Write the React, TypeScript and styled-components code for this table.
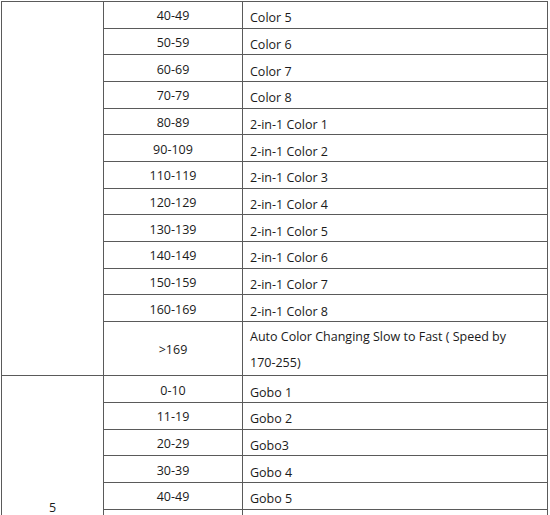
import React from "react";
import styled, { createGlobalStyle } from "styled-components";

const Global = createGlobalStyle`
  html, body { margin: 0; padding: 0; background: #ffffff; }
  body { font-family: "Open Sans", "Noto Sans", "DejaVu Sans", sans-serif; color: #1a1a1a; }
`;

const Table = styled.table`
  border-collapse: collapse;
  table-layout: fixed;
  width: 546px;
  margin: 1px 0 0 1px;
  font-size: 12.5px;
`;

const Col = styled.col<{ $w: number }>`
  width: ${(p) => p.$w}px;
`;

const Row = styled.tr<{ $h: number }>`
  height: ${(p) => p.$h}px;
`;

const Cell = styled.td`
  border: 1px solid #5a5a5a;
  padding: 0;
`;

const ChannelCell = styled(Cell)`
  text-align: center;
  vertical-align: bottom;
  line-height: 12px;
  padding-bottom: 3px;
`;

const ValueCell = styled(Cell)`
  text-align: center;
  vertical-align: middle;
  line-height: 18px;
  padding-top: 3px;
`;

const FunctionCell = styled(Cell)<{ $tall?: boolean }>`
  text-align: left;
  padding-left: 7px;
  vertical-align: ${(p) => (p.$tall ? "top" : "middle")};
  line-height: ${(p) => (p.$tall ? "25.5px" : "18px")};
  padding-top: ${(p) => (p.$tall ? "2.5px" : "7px")};
`;

type Item = { v: string; f: React.ReactNode; h: number };

const ROW = 26.67;

const colorRows: Item[] = [
  { v: "40-49", f: "Color 5", h: ROW },
  { v: "50-59", f: "Color 6", h: ROW },
  { v: "60-69", f: "Color 7", h: ROW },
  { v: "70-79", f: "Color 8", h: ROW },
  { v: "80-89", f: "2-in-1 Color 1", h: ROW },
  { v: "90-109", f: "2-in-1 Color 2", h: ROW },
  { v: "110-119", f: "2-in-1 Color 3", h: ROW },
  { v: "120-129", f: "2-in-1 Color 4", h: ROW },
  { v: "130-139", f: "2-in-1 Color 5", h: ROW },
  { v: "140-149", f: "2-in-1 Color 6", h: ROW },
  { v: "150-159", f: "2-in-1 Color 7", h: ROW },
  { v: "160-169", f: "2-in-1 Color 8", h: ROW },
  {
    v: ">169",
    f: (
      <>
        Auto Color Changing Slow to Fast ( Speed by
        <br />
        170-255)
      </>
    ),
    h: 53,
  },
];

const goboRows: Item[] = [
  { v: "0-10", f: "Gobo 1", h: ROW },
  { v: "11-19", f: "Gobo 2", h: ROW },
  { v: "20-29", f: "Gobo3", h: ROW },
  { v: "30-39", f: "Gobo 4", h: ROW },
  { v: "40-49", f: "Gobo 5", h: ROW },
  { v: "", f: "", h: 6 },
];

const groups: { ch: string; rows: Item[] }[] = [
  { ch: "", rows: colorRows },
  { ch: "5", rows: goboRows },
];

export default function App() {
  return (
    <>
      <Global />
      <Table>
        <colgroup>
          <Col $w={102} />
          <Col $w={139} />
          <Col $w={305} />
        </colgroup>
        <tbody>
          {groups.map((g, gi) =>
            g.rows.map((r, ri) => (
              <Row key={`${gi}-${ri}`} $h={r.h}>
                {ri === 0 && <ChannelCell rowSpan={g.rows.length}>{g.ch}</ChannelCell>}
                <ValueCell>{r.v}</ValueCell>
                <FunctionCell $tall={r.h > 40}>{r.f}</FunctionCell>
              </Row>
            ))
          )}
        </tbody>
      </Table>
    </>
  );
}
